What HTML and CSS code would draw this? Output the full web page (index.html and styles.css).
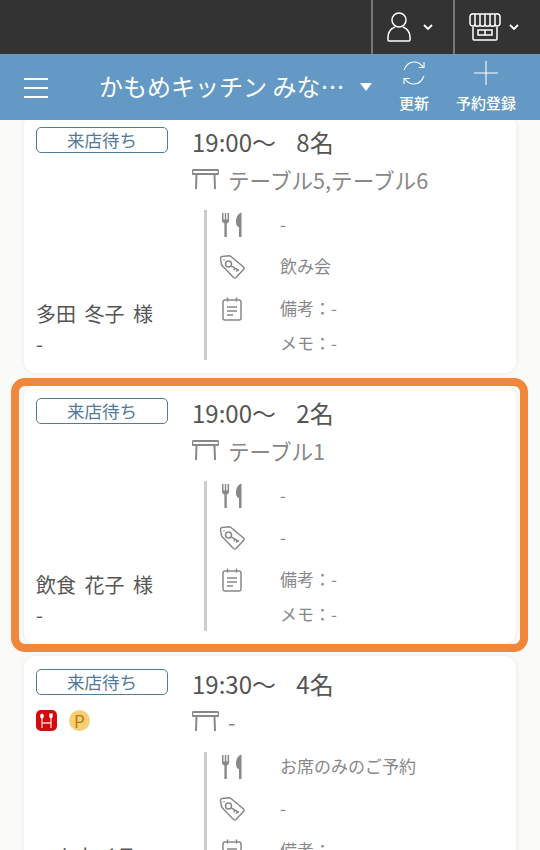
FILE: index.html
```html
<!DOCTYPE html>
<html lang="ja">
<head>
    <meta charset="UTF-8">
    <meta name="viewport" content="width=device-width, initial-scale=1.0">
    <title>予約一覧</title>
    <link rel="stylesheet" href="styles.css">
</head>
<body>

<!-- icons used in every card -->
<svg class="icon-defs">
    <symbol id="i-table" viewBox="0 0 27 22">
        <path d="M2 2h23a1 1 0 0 1 0 4H2a1 1 0 0 1 0-4zM4.500 6L4 21M22.500 6L23 21" fill="none" stroke="#888" stroke-width="2"/>
    </symbol>
    <symbol id="i-food" viewBox="0 0 24 26">
        <path d="M2 1h1.500v6.500h1.300V1h1.500v6.500h1.300V1H9.100v7.500a3 3 0 0 1-2.300 2.900V25H4.400V11.400A3 3 0 0 1 2 8.500zM21.500 .5c-3.500 1-5.500 4.500-5.500 9.500 0 3 1 4.700 3 5.200V25h2.500z" fill="#888"/>
    </symbol>
    <symbol id="i-tag" viewBox="0 0 26 24">
        <path d="M2.500 9.500L1.500 3.500Q1.500 1.800 3 1.600L10 .8Q11 .8 12 1.500L24.500 12Q25.500 13.500 24.500 14.500L17 22.500Q16 23.500 14.500 22.500L3.500 11Q2.700 10.300 2.500 9.500z" fill="none" stroke="#888" stroke-width="1.500"/>
        <circle cx="9.500" cy="9" r="3" fill="none" stroke="#888" stroke-width="1.500"/>
        <path d="M12 10.800L20 15.500M16 13.200l-1.200 2M18.500 14.600l-1.200 2" fill="none" stroke="#888" stroke-width="1.500"/>
        <circle cx="5" cy="4.800" r=".8" fill="#888"/>
    </symbol>
    <symbol id="i-note" viewBox="0 0 24 24">
        <path d="M5 3h14a2 2 0 0 1 2 2v16a2 2 0 0 1-2 2H5a2 2 0 0 1-2-2V5a2 2 0 0 1 2-2zM7.500 .5v4M16.500 .5v4M7 10h10M7 14h10M7 18h6" fill="none" stroke="#888" stroke-width="1.500"/>
    </symbol>
    <symbol id="i-chevron" viewBox="0 0 10 6">
        <path d="M1 1l4 4 4-4" fill="none" stroke="#fff" stroke-width="1.800"/>
    </symbol>
</svg>

<div class="top-bar">
    <div class="top-menu user-menu">
        <svg class="user-icon" viewBox="0 0 24 30" fill="none" stroke="#fff" stroke-width="1.500">
            <circle cx="12" cy="8" r="7"/>
            <path d="M8 15C3 17 1 20 1 25v3a1 1 0 0 0 1 1h20a1 1 0 0 0 1-1v-3c0-5-2-8-7-10"/>
        </svg>
        <svg class="chevron"><use href="#i-chevron"/></svg>
    </div>
    <div class="top-menu store-menu">
        <svg class="store-icon" viewBox="0 0 32 28" fill="none" stroke="#fff" stroke-width="1.500">
            <path d="M5 1h22a3 3 0 0 1 4 3v7a3 3 0 0 1-5 1 3 3 0 0 1-5 0 3 3 0 0 1-5 0 3 3 0 0 1-5 0 3 3 0 0 1-5 0 3 3 0 0 1-5-1V4a3 3 0 0 1 4-3z"/>
            <path d="M6 1v11M11 1v11M16 1v11M21 1v11M26 1v11"/>
            <path d="M4 14v12a1 1 0 0 0 1 1h22a1 1 0 0 0 1-1V14"/>
            <path d="M9 17h14v5H9zM16 17v5"/>
        </svg>
        <svg class="chevron"><use href="#i-chevron"/></svg>
    </div>
</div>

<div class="header">
    <div class="hamburger"><span></span><span></span><span></span></div>
    <div class="shop-name">
        <span class="shop-text">かもめキッチン みなとみらい店</span>
        <span class="shop-arrow"></span>
    </div>
    <div class="header-btn refresh-btn">
        <svg viewBox="0 0 26 26" fill="none" stroke="#fff" stroke-width="1.100">
            <path d="M3 10C5 5 9 2 13 2c4 0 7 2 9 5"/>
            <path d="M23 2v5.500h-5.500"/>
            <path d="M23 16c-2 5-6 8-10 8-4 0-7-2-9-5"/>
            <path d="M3 24v-5.500h5.500"/>
        </svg>
        <span>更新</span>
    </div>
    <div class="header-btn add-btn">
        <svg viewBox="0 0 26 26" fill="none" stroke="#fff" stroke-width="1.100"><path d="M13 1v24M1 13h24"/></svg>
        <span>予約登録</span>
    </div>
</div>

<div class="list">
    <div class="list-inner">

        <div class="card">
            <div class="card-left">
                <div class="status">来店待ち</div>
                <div class="guest">
                    <p class="guest-name">多田 冬子 様</p>
                    <p class="guest-sub">-</p>
                </div>
            </div>
            <div class="card-right">
                <p class="time">19:00〜 8名</p>
                <div class="table-row">
                    <svg class="table-icon"><use href="#i-table"/></svg>
                    <span>テーブル5,テーブル6</span>
                </div>
                <div class="details">
                    <div class="detail">
                        <svg class="detail-icon food-icon"><use href="#i-food"/></svg>
                        <span>-</span>
                    </div>
                    <div class="detail">
                        <svg class="detail-icon tag-icon"><use href="#i-tag"/></svg>
                        <span>飲み会</span>
                    </div>
                    <div class="detail">
                        <svg class="detail-icon"><use href="#i-note"/></svg>
                        <span>備考：-</span>
                    </div>
                    <div class="detail detail-memo">
                        <span>メモ：-</span>
                    </div>
                </div>
            </div>
        </div>

        <div class="card card-selected">
            <div class="card-left">
                <div class="status">来店待ち</div>
                <div class="guest">
                    <p class="guest-name">飲食 花子 様</p>
                    <p class="guest-sub">-</p>
                </div>
            </div>
            <div class="card-right">
                <p class="time">19:00〜 2名</p>
                <div class="table-row">
                    <svg class="table-icon"><use href="#i-table"/></svg>
                    <span>テーブル1</span>
                </div>
                <div class="details">
                    <div class="detail">
                        <svg class="detail-icon food-icon"><use href="#i-food"/></svg>
                        <span>-</span>
                    </div>
                    <div class="detail">
                        <svg class="detail-icon tag-icon"><use href="#i-tag"/></svg>
                        <span>-</span>
                    </div>
                    <div class="detail">
                        <svg class="detail-icon"><use href="#i-note"/></svg>
                        <span>備考：-</span>
                    </div>
                    <div class="detail detail-memo">
                        <span>メモ：-</span>
                    </div>
                </div>
            </div>
        </div>

        <div class="card">
            <div class="card-left">
                <div class="status">来店待ち</div>
                <div class="badges">
                    <svg class="badge" viewBox="0 0 21 21">
                        <rect width="21" height="21" rx="5" fill="#d40b0b"/>
                        <path d="M6 8v10M15 8v10M6 13h9" stroke="#ffd6d6" stroke-width="1.300" fill="none"/>
                        <ellipse cx="6" cy="6" rx="1.800" ry="2.500" fill="#fff"/>
                        <path d="M13.300 3.500v3a1.700 1.700 0 0 0 3.400 0v-3z" fill="#fff"/>
                    </svg>
                    <span class="badge-p">P</span>
                </div>
                <div class="guest">
                    <p class="guest-name">エキカイラ</p>
                    <p class="guest-sub">-</p>
                </div>
            </div>
            <div class="card-right">
                <p class="time">19:30〜 4名</p>
                <div class="table-row">
                    <svg class="table-icon"><use href="#i-table"/></svg>
                    <span>-</span>
                </div>
                <div class="details">
                    <div class="detail">
                        <svg class="detail-icon food-icon"><use href="#i-food"/></svg>
                        <span>お席のみのご予約</span>
                    </div>
                    <div class="detail">
                        <svg class="detail-icon tag-icon"><use href="#i-tag"/></svg>
                        <span>-</span>
                    </div>
                    <div class="detail">
                        <svg class="detail-icon"><use href="#i-note"/></svg>
                        <span>備考：-</span>
                    </div>
                    <div class="detail detail-memo">
                        <span>メモ：-</span>
                    </div>
                </div>
            </div>
        </div>

    </div>
</div>

</body>
</html>
```

FILE: styles.css
```css
* {
    margin: 0;
    padding: 0;
    box-sizing: border-box;
    font-family: "Noto Sans CJK JP", "Noto Sans", sans-serif;
}

body {
    background: #fafaf8;
    height: 850px;
    overflow: hidden;
}

.icon-defs {
    display: none;
}

.top-bar {
    height: 54px;
    background: #333333;
    display: flex;
    justify-content: flex-end;
}

.top-menu {
    display: flex;
    align-items: center;
    border-left: 2px solid #777;
}

.user-menu {
    width: 82px;
    padding-left: 14px;
    gap: 12px;
}

.store-menu {
    width: 87px;
    padding-left: 14px;
    gap: 8px;
}

.user-icon {
    width: 24px;
    height: 30px;
}

.store-icon {
    width: 32px;
    height: 28px;
}

.chevron {
    width: 10px;
    height: 6px;
}

.header {
    height: 66px;
    background: #6399c4;
    color: #fff;
    display: flex;
    align-items: flex-start;
    position: relative;
    z-index: 2;
}

.hamburger {
    width: 24px;
    margin: 24px 0 0 24px;
    display: flex;
    flex-direction: column;
    gap: 7px;
}

.hamburger span {
    height: 2px;
    background: #fff;
}

.shop-name {
    width: 275px;
    margin: 13px 0 0 51px;
    display: flex;
    align-items: center;
}

.shop-text {
    width: 246px;
    font-size: 24px;
    line-height: 38px;
    white-space: nowrap;
    overflow: hidden;
    text-overflow: ellipsis;
}

.shop-arrow {
    margin: 2px 0 0 15px;
    border-left: 6.500px solid transparent;
    border-right: 6.500px solid transparent;
    border-top: 8px solid #fff;
}

.header-btn {
    display: flex;
    flex-direction: column;
    align-items: center;
    font-size: 15px;
    font-weight: 500;
}

.header-btn svg {
    width: 26px;
    height: 26px;
    margin-top: 6px;
}

.header-btn span {
    line-height: 20px;
    margin-top: 7px;
    white-space: nowrap;
}

.refresh-btn {
    width: 30px;
    margin-left: 25px;
}

.add-btn {
    width: 60px;
    margin-left: 27px;
}

.list {
    height: 730px;
    overflow: hidden;
}

.list-inner {
    margin-top: -6px;
    padding: 0 24px;
    display: flex;
    flex-direction: column;
    gap: 12px;
}

.card {
    height: 259px;
    background: #fff;
    border-radius: 12px;
    box-shadow: 0 0 5px rgba(0, 0, 0, 0.08);
    padding: 13px 12px 0;
    display: flex;
    flex-shrink: 0;
    position: relative;
}

.card-selected::after {
    content: "";
    position: absolute;
    top: -7px;
    left: -13px;
    right: -12px;
    bottom: -8px;
    border: 8px solid #f0873a;
    border-radius: 14px;
}

.card-left {
    width: 156px;
    flex-shrink: 0;
    display: flex;
    flex-direction: column;
}

.status {
    width: 132px;
    height: 26px;
    border: 1px solid #517a9b;
    border-radius: 5px;
    color: #517a9b;
    font-size: 17.500px;
    line-height: 23px;
    text-align: center;
}

.badges {
    display: flex;
    align-items: center;
    gap: 12px;
    margin-top: 15px;
}

.badge {
    width: 21px;
    height: 21px;
}

.badge-p {
    width: 21px;
    height: 21px;
    border-radius: 50%;
    background: #f5cf78;
    color: #b97a0a;
    font-size: 17px;
    line-height: 21px;
    text-align: center;
}

.guest {
    margin-top: auto;
    padding-bottom: 14px;
    color: #555;
    font-size: 20px;
    line-height: 30px;
    word-spacing: 4px;
}

.card-right {
    flex: 1;
    display: flex;
    flex-direction: column;
}

.time {
    font-size: 24px;
    line-height: 36px;
    margin-top: -3px;
    color: #555;
    word-spacing: 15px;
}

.table-row {
    display: flex;
    align-items: center;
    gap: 9px;
    height: 32px;
    margin-top: 3px;
    color: #888;
    font-size: 21.600px;
}

.table-icon {
    width: 27px;
    height: 22px;
}

.details {
    margin: 15px 0 0 12px;
    height: 150px;
    border-left: 3px solid #ccc;
    padding-left: 13px;
}

.detail {
    height: 42px;
    display: flex;
    align-items: center;
    color: #888;
    font-size: 17px;
}

.detail:first-child {
    height: 30px;
    margin-bottom: 6px;
}

.detail span {
    margin-top: -4px;
}

.detail-icon {
    width: 24px;
    height: 24px;
    margin-right: 36px;
    flex-shrink: 0;
}

.food-icon {
    height: 26px;
}

.tag-icon {
    width: 26px;
    margin: 0 35px 0 -1px;
}

.detail-memo {
    height: 28px;
    padding-left: 60px;
}
```
